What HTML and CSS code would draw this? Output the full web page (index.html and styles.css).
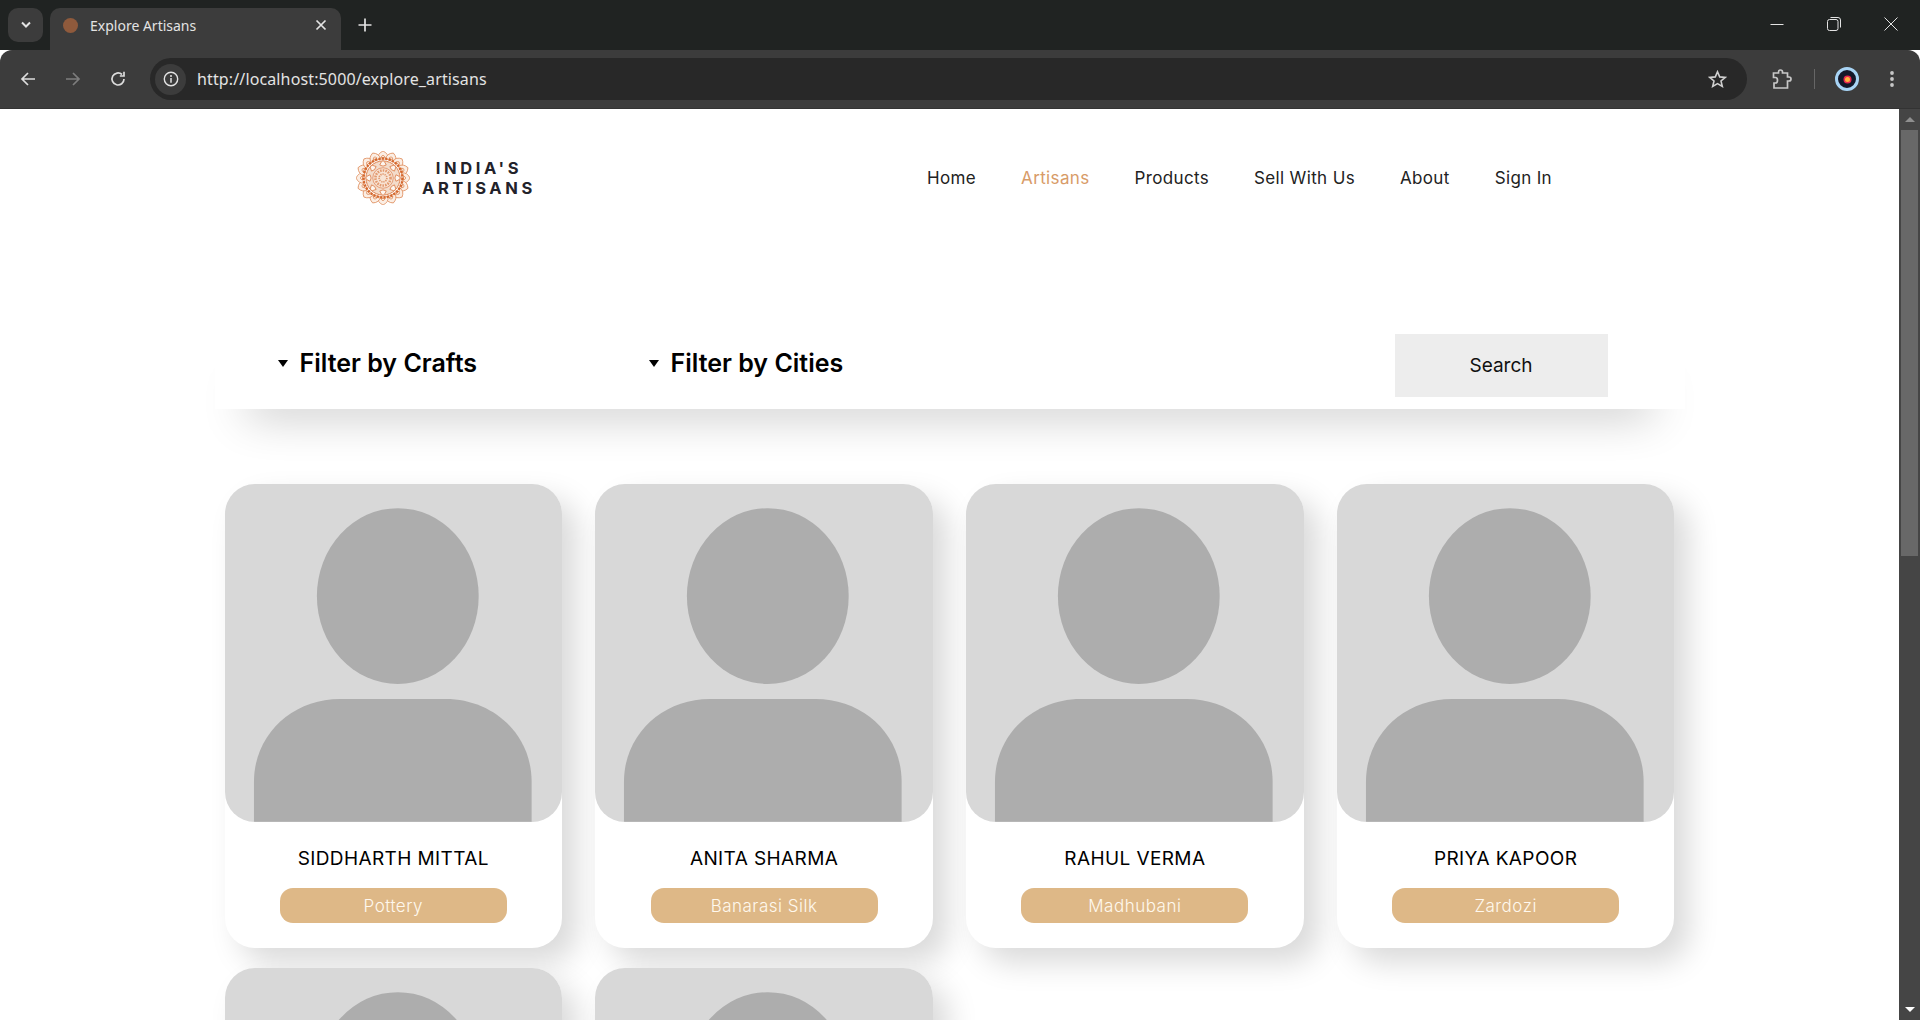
FILE: index.html
```html
<!DOCTYPE html>
<html lang="en">

<head>
    <meta charset="UTF-8">
    <meta name="viewport" content="width=device-width, initial-scale=1.0">
    <title>Explore Artisans</title>
    <link rel="stylesheet" href="styles.css">
</head>

<body>

    <!-- Browser frame -->
    <div class="tab-strip">
        <div class="tab-search">
            <svg width="12" height="8" viewBox="0 0 12 8"><path d="M2 1.5 L6 5.5 L10 1.5" fill="none" stroke="#e3e3e3" stroke-width="2"/></svg>
        </div>
        <div class="tab">
            <span class="favicon"></span>
            <span class="tab-title">Explore Artisans</span>
            <svg class="tab-close" width="12" height="12" viewBox="0 0 12 12"><path d="M1.5 1.5 L10.5 10.5 M10.5 1.5 L1.5 10.5" stroke="#e3e3e3" stroke-width="1.7"/></svg>
        </div>
        <svg class="new-tab" width="14" height="14" viewBox="0 0 14 14"><path d="M7 0.5 V13.5 M0.5 7 H13.5" stroke="#e3e3e3" stroke-width="1.7"/></svg>
        <div class="window-controls">
            <svg width="14" height="14" viewBox="0 0 14 14"><path d="M0.5 7.5 H13.5" stroke="#e3e3e3" stroke-width="1"/></svg>
            <svg width="14" height="14" viewBox="0 0 14 14"><rect x="0.5" y="2.5" width="10.5" height="11" rx="2" fill="none" stroke="#e3e3e3"/><path d="M3.5 0.5 H11 Q13.5 0.5 13.5 3 V10.5" fill="none" stroke="#e3e3e3"/></svg>
            <svg width="14" height="14" viewBox="0 0 14 14"><path d="M0.5 0.5 L13.5 13.5 M13.5 0.5 L0.5 13.5" stroke="#e3e3e3" stroke-width="1"/></svg>
        </div>
    </div>

    <div class="toolbar">
        <svg class="tool-icon" width="16" height="16" viewBox="0 0 16 16"><path d="M15 8 H2 M8 2 L2 8 L8 14" fill="none" stroke="#dcdcdc" stroke-width="1.7"/></svg>
        <svg class="tool-icon" width="16" height="16" viewBox="0 0 16 16"><path d="M1 8 H14 M8 2 L14 8 L8 14" fill="none" stroke="#7d7d7d" stroke-width="1.7"/></svg>
        <svg class="tool-icon" width="16" height="16" viewBox="0 0 16 16"><path d="M14 8 A6 6 0 1 1 12 3.5 M14 0.8 V5 H9.8" fill="none" stroke="#dcdcdc" stroke-width="1.7"/></svg>
        <div class="address-bar">
            <span class="site-info">
                <svg width="16" height="16" viewBox="0 0 16 16"><circle cx="8" cy="8" r="6.7" fill="none" stroke="#e3e3e3" stroke-width="1.4"/><path d="M8 7 V11.8" stroke="#e3e3e3" stroke-width="1.5"/><circle cx="8" cy="4.9" r="1" fill="#e3e3e3"/></svg>
            </span>
            <span class="url">http://localhost:5000/explore_artisans</span>
            <svg class="star" width="19" height="18" viewBox="0 0 19 18"><path d="M9.5 1.8 L11.7 6.9 L17.2 7.4 L13 11 L14.3 16.4 L9.5 13.6 L4.7 16.4 L6 11 L1.8 7.4 L7.3 6.9 Z" fill="none" stroke="#d0d0d0" stroke-width="1.6"/></svg>
        </div>
        <svg class="ext-icon" width="20" height="20" viewBox="0 0 20 20"><path d="M1.5 4 H6.5 V3 Q6.5 1 8.5 1 Q10.5 1 10.5 3 V4 H15.5 V8 H17 Q19 8 19 10 Q19 12 17 12 H15.5 V19 H2 V14 H3.5 Q5.5 14 5.5 11.2 Q5.5 8.5 3.5 8.5 H1.5 Z" fill="none" stroke="#c7c7c7" stroke-width="1.7"/></svg>
        <span class="divider"></span>
        <span class="avatar"><span class="avatar-dot"></span></span>
        <svg class="kebab" width="4" height="18" viewBox="0 0 4 18"><circle cx="2" cy="3" r="1.9" fill="#c7c7c7"/><circle cx="2" cy="9" r="1.9" fill="#c7c7c7"/><circle cx="2" cy="15" r="1.9" fill="#c7c7c7"/></svg>
    </div>

    <div class="viewport">
        <div class="page">

            <header class="site-header">
                <a href="#" class="logo">
                    <svg class="logo-mark" width="54" height="54" viewBox="-25 -25 50 50">
                        <defs>
                            <g id="petal-out">
                                <path d="M-4.6 -17.5 Q-5.4 -22.5 0 -25 Q5.4 -22.5 4.6 -17.5 Z"/>
                                <path d="M-2 -19 Q0 -23 2 -19 Z"/>
                            </g>
                            <path id="petal-in" d="M-3 -12 Q0 -20 3 -12 Q0 -10 -3 -12 Z"/>
                        </defs>
                        <g fill="#fbeee4" stroke="#de8a58" stroke-width="0.7">
                            <use href="#petal-out"/>
                            <use href="#petal-out" transform="rotate(22.5)"/>
                            <use href="#petal-out" transform="rotate(45)"/>
                            <use href="#petal-out" transform="rotate(67.5)"/>
                            <use href="#petal-out" transform="rotate(90)"/>
                            <use href="#petal-out" transform="rotate(112.5)"/>
                            <use href="#petal-out" transform="rotate(135)"/>
                            <use href="#petal-out" transform="rotate(157.5)"/>
                            <use href="#petal-out" transform="rotate(180)"/>
                            <use href="#petal-out" transform="rotate(202.5)"/>
                            <use href="#petal-out" transform="rotate(225)"/>
                            <use href="#petal-out" transform="rotate(247.5)"/>
                            <use href="#petal-out" transform="rotate(270)"/>
                            <use href="#petal-out" transform="rotate(292.5)"/>
                            <use href="#petal-out" transform="rotate(315)"/>
                            <use href="#petal-out" transform="rotate(337.5)"/>
                        </g>
                        <circle r="18" fill="none" stroke="#d5682e" stroke-width="2.2" stroke-dasharray="2 1.2"/>
                        <circle r="15.8" fill="#f3dccb" stroke="#d9733a" stroke-width="0.8"/>
                        <g fill="#fdf6f0" stroke="#dd8250" stroke-width="0.8">
                            <use href="#petal-in"/>
                            <use href="#petal-in" transform="rotate(45)"/>
                            <use href="#petal-in" transform="rotate(90)"/>
                            <use href="#petal-in" transform="rotate(135)"/>
                            <use href="#petal-in" transform="rotate(180)"/>
                            <use href="#petal-in" transform="rotate(225)"/>
                            <use href="#petal-in" transform="rotate(270)"/>
                            <use href="#petal-in" transform="rotate(315)"/>
                        </g>
                        <circle r="9.5" fill="#f8e4d5" stroke="#e0885a" stroke-width="0.7"/>
                        <circle r="7" fill="none" stroke="#e29a70" stroke-width="2.4" stroke-dasharray="1.5 1"/>
                        <circle r="3.6" fill="none" stroke="#e29a70" stroke-width="1.6" stroke-dasharray="1.2 0.8"/>
                    </svg>
                    <span class="logo-text">INDIA'S<br>ARTISANS</span>
                </a>
                <nav class="site-nav">
                    <a href="#">Home</a>
                    <a href="#" class="active">Artisans</a>
                    <a href="#">Products</a>
                    <a href="#">Sell With Us</a>
                    <a href="#">About</a>
                    <a href="#">Sign In</a>
                </nav>
            </header>

            <main class="content">
                <form class="filter-bar">
                    <details class="filter">
                        <summary>Filter by Crafts</summary>
                    </details>
                    <details class="filter">
                        <summary>Filter by Cities</summary>
                    </details>
                    <button type="button" class="search-button">Search</button>
                </form>

                <section class="artisan-grid">
                    <article class="artisan-card">
                        <svg class="artisan-photo" viewBox="0 0 338 338"><ellipse cx="173" cy="112" rx="81" ry="88"/><path d="M29 338 V298 C29 250 68 215 115 215 H221 C268 215 307 250 307 298 V338 Z"/></svg>
                        <h3>SIDDHARTH MITTAL</h3>
                        <span class="craft-tag">Pottery</span>
                    </article>
                    <article class="artisan-card">
                        <svg class="artisan-photo" viewBox="0 0 338 338"><ellipse cx="173" cy="112" rx="81" ry="88"/><path d="M29 338 V298 C29 250 68 215 115 215 H221 C268 215 307 250 307 298 V338 Z"/></svg>
                        <h3>ANITA SHARMA</h3>
                        <span class="craft-tag">Banarasi Silk</span>
                    </article>
                    <article class="artisan-card">
                        <svg class="artisan-photo" viewBox="0 0 338 338"><ellipse cx="173" cy="112" rx="81" ry="88"/><path d="M29 338 V298 C29 250 68 215 115 215 H221 C268 215 307 250 307 298 V338 Z"/></svg>
                        <h3>RAHUL VERMA</h3>
                        <span class="craft-tag">Madhubani</span>
                    </article>
                    <article class="artisan-card">
                        <svg class="artisan-photo" viewBox="0 0 338 338"><ellipse cx="173" cy="112" rx="81" ry="88"/><path d="M29 338 V298 C29 250 68 215 115 215 H221 C268 215 307 250 307 298 V338 Z"/></svg>
                        <h3>PRIYA KAPOOR</h3>
                        <span class="craft-tag">Zardozi</span>
                    </article>
                    <article class="artisan-card">
                        <svg class="artisan-photo" viewBox="0 0 338 338"><ellipse cx="173" cy="112" rx="81" ry="88"/><path d="M29 338 V298 C29 250 68 215 115 215 H221 C268 215 307 250 307 298 V338 Z"/></svg>
                    </article>
                    <article class="artisan-card">
                        <svg class="artisan-photo" viewBox="0 0 338 338"><ellipse cx="173" cy="112" rx="81" ry="88"/><path d="M29 338 V298 C29 250 68 215 115 215 H221 C268 215 307 250 307 298 V338 Z"/></svg>
                    </article>
                </section>
            </main>
        </div>

        <!-- Scrollbar -->
        <div class="scrollbar">
            <span class="scroll-arrow up"></span>
            <div class="scroll-track"><span class="scroll-thumb"></span></div>
            <span class="scroll-arrow down"></span>
        </div>
    </div>

</body>

</html>
```
FILE: styles.css
```css
* {
    margin: 0;
    padding: 0;
    box-sizing: border-box;
}

html,
body {
    height: 100%;
    overflow: hidden;
}

body {
    font-family: Inter, "Open Sans", sans-serif;
    background-color: #ffffff;
    color: #111111;
    display: flex;
    flex-direction: column;
}

a {
    text-decoration: none;
    color: inherit;
}

/* Browser frame */
.tab-strip {
    height: 50px;
    flex-shrink: 0;
    background-color: #202322;
    display: flex;
    align-items: flex-end;
    padding-left: 8px;
}

.tab-search {
    width: 35px;
    height: 34px;
    margin-bottom: 8px;
    background-color: #3c3c3c;
    border-radius: 10px;
    display: flex;
    align-items: center;
    justify-content: center;
}

.tab {
    width: 291px;
    height: 42px;
    margin-left: 7px;
    background-color: #3c3c3c;
    border-radius: 10px 10px 0 0;
    display: flex;
    align-items: center;
    padding: 0 14px 8px 13px;
    font-family: "Noto Sans", sans-serif;
    font-size: 14px;
    color: #e3e3e3;
}

.favicon {
    width: 15px;
    height: 15px;
    border-radius: 50%;
    background-color: #8f5a3c;
    margin-right: 12px;
}

.tab-title {
    flex: 1;
}

.new-tab {
    margin: 0 0 18px 17px;
}

.window-controls {
    margin-left: auto;
    display: flex;
    gap: 43px;
    padding: 0 22px 19px 0;
}

.toolbar {
    height: 59px;
    flex-shrink: 0;
    background-color: #3c3c3c;
    border-radius: 12px 12px 0 0;
    border-bottom: 1px solid #333333;
    display: flex;
    align-items: center;
    padding: 0 20px;
}

.tool-icon {
    margin-right: 29px;
}

.tool-icon:nth-of-type(3) {
    margin-right: 24px;
}

.address-bar {
    width: 1597px;
    height: 42px;
    background-color: #282828;
    border-radius: 21px;
    display: flex;
    align-items: center;
    padding: 0 20px 0 5px;
    margin-right: 25px;
}

.site-info {
    width: 31px;
    height: 31px;
    border-radius: 50%;
    background-color: #3c3c3c;
    display: flex;
    align-items: center;
    justify-content: center;
    margin-right: 11px;
}

.url {
    flex: 1;
    font-family: "Noto Sans", sans-serif;
    font-size: 16px;
    letter-spacing: 0.13px;
    color: #e3e3e3;
}

.divider {
    width: 1px;
    height: 20px;
    background-color: #666666;
    margin: 0 20px 0 22px;
}

.avatar {
    width: 24px;
    height: 24px;
    border-radius: 50%;
    background-color: #14182a;
    border: 3px solid #a8d4f5;
    display: flex;
    align-items: center;
    justify-content: center;
}

.avatar-dot {
    width: 5px;
    height: 5px;
    border-radius: 50%;
    background-color: #ffb23e;
    box-shadow: 0 0 0 1.5px #e8284f;
}

.kebab {
    margin-left: 31px;
}

/* Page area */
.viewport {
    flex: 1;
    min-height: 0;
    display: flex;
}

.page {
    flex: 1;
    min-width: 0;
    overflow: hidden;
}

.scrollbar {
    width: 21px;
    flex-shrink: 0;
    background-color: #454545;
    display: flex;
    flex-direction: column;
    align-items: center;
}

.scroll-arrow {
    height: 21px;
    flex-shrink: 0;
    display: flex;
    align-items: center;
}

.scroll-arrow::before {
    content: "";
    border-left: 5px solid transparent;
    border-right: 5px solid transparent;
}

.scroll-arrow.up::before {
    border-bottom: 5px solid #8f8f8f;
}

.scroll-arrow.down::before {
    border-top: 5px solid #ffffff;
}

.scroll-track {
    flex: 1;
    width: 100%;
    padding: 0 2px;
}

.scroll-thumb {
    display: block;
    height: 426px;
    background-color: #686868;
}

/* Header */
.site-header {
    height: 138px;
    padding: 0 347px 0 356px;
    display: flex;
    align-items: center;
    justify-content: space-between;
}

.logo {
    display: flex;
    align-items: center;
    gap: 12px;
}

.logo-text {
    font-size: 16.5px;
    line-height: 20px;
    font-weight: 700;
    letter-spacing: 3.6px;
    text-align: center;
    color: #22222a;
}

.site-nav {
    display: flex;
    gap: 45px;
    font-size: 17px;
    letter-spacing: 0.35px;
    color: #222222;
}

.site-nav .active {
    color: #d89b68;
}

/* Filters */
.content {
    width: 1470px;
    margin: 75px auto 0;
}

.filter-bar {
    height: 87px;
    background-color: #ffffff;
    box-shadow: 0 36px 46px -32px rgba(0, 0, 0, 0.3);
    display: flex;
    align-items: flex-start;
    padding: 12px 77px 0 63px;
}

.filter {
    width: 371px;
    padding-top: 14px;
}

.filter summary {
    font-size: 25px;
    font-weight: 600;
    color: #000000;
    cursor: pointer;
    list-style: none;
    display: flex;
    align-items: center;
}

.filter summary::before {
    content: "";
    border-left: 5px solid transparent;
    border-right: 5px solid transparent;
    border-top: 7px solid #000000;
    margin-right: 12px;
}

.search-button {
    margin-left: auto;
    width: 213px;
    height: 63px;
    border: none;
    background-color: #ededed;
    font-family: inherit;
    font-size: 19px;
    font-weight: 400;
    color: #111111;
}

/* Artisan cards */
.artisan-grid {
    display: grid;
    grid-template-columns: repeat(4, 337.6px);
    gap: 20px 33.2px;
    margin: 75px 10px 0;
}

.artisan-card {
    height: 464px;
    background-color: #ffffff;
    border-radius: 30px;
    box-shadow: 15px 15px 30px rgba(0, 0, 0, 0.15);
    text-align: center;
}

.artisan-photo {
    display: block;
    width: 100%;
    height: 338px;
    background-color: #d8d8d8;
    border-radius: 30px;
    fill: #adadad;
}

.artisan-card h3 {
    font-size: 19px;
    font-weight: 400;
    letter-spacing: 0.4px;
    line-height: 22px;
    margin-top: 26px;
    color: #000000;
}

.craft-tag {
    display: block;
    width: 227px;
    height: 35px;
    line-height: 37px;
    margin: 18px auto 0;
    background-color: #deb887;
    border-radius: 13px;
    font-size: 17px;
    font-weight: 300;
    letter-spacing: 0.5px;
    color: #fff8ee;
}
```
